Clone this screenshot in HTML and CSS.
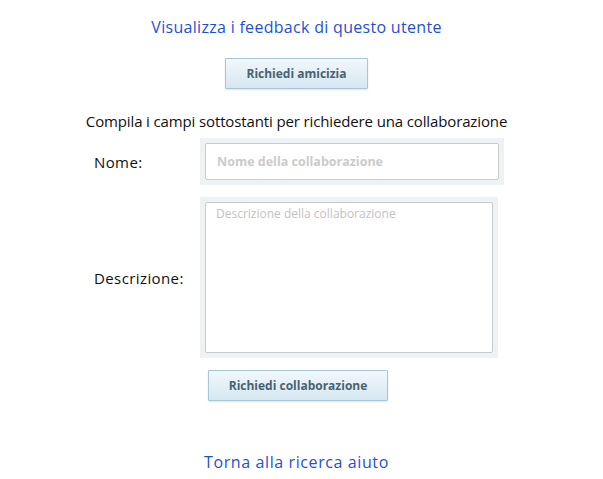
FILE: index.html
```html
<!DOCTYPE html>
<html lang="it">
<head>
<meta charset="utf-8">
<link rel="stylesheet" href="styles.css">
</head>
<body>
<div class="page">
  <a class="link title-link" href="#">Visualizza i feedback di questo utente</a>
  <button class="btn btn-friend" type="button">Richiedi amicizia</button>
  <p class="intro">Compila i campi sottostanti per richiedere una collaborazione</p>
  <form class="form">
    <label class="label label-name" for="nome">Nome:</label>
    <div class="field field-name"><input id="nome" class="input" type="text" placeholder="Nome della collaborazione"></div>
    <label class="label label-desc" for="desc">Descrizione:</label>
    <div class="field field-desc"><textarea id="desc" class="textarea" placeholder="Descrizione della collaborazione"></textarea></div>
    <div class="actions"><button class="btn btn-collab" type="button">Richiedi collaborazione</button></div>
  </form>
  <a class="link back-link" href="#">Torna alla ricerca aiuto</a>
</div>
</body>
</html>
```
FILE: styles.css
```css
html, body {
  margin: 0;
  padding: 0;
  background: #fff;
}
.page {
  width: 593px;
  display: flex;
  flex-direction: column;
  align-items: center;
  font-family: "Open Sans", "DejaVu Sans", sans-serif;
  color: #111;
}
.link {
  color: #1f4fd8;
  text-decoration: none;
  font-size: 16px;
  line-height: 20px;
  letter-spacing: 0.3px;
}
.title-link {
  margin-top: 17px;
}
.btn {
  font-family: "Open Sans", "DejaVu Sans", sans-serif;
  font-weight: 700;
  font-size: 12px;
  color: #4a6272;
  background: linear-gradient(#f1f8fc, #d5e7f1);
  border: 1px solid #a9c5d6;
  border-radius: 1px;
  box-shadow: 0 1px 2px rgba(0,0,0,0.12);
  height: 31px;
  padding: 0;
}
.btn-friend {
  width: 143px;
  margin-top: 21px;
}
.intro {
  margin: 22px 0 0;
  font-size: 15px;
  line-height: 20px;
  letter-spacing: -0.13px;
}
.form {
  margin-top: 7px;
  display: grid;
  grid-template-columns: 106px 304px;
  row-gap: 12px;
  align-items: center;
  margin-left: 5px;
}
.label {
  font-size: 15px;
  letter-spacing: 0.4px;
  color: #111;
}
.field {
  background: #eef2f4;
  padding: 5px;
}
.field-name {
  width: 294px;
}
.field-desc {
  width: 288px;
}
.input {
  box-sizing: border-box;
  display: block;
  width: 100%;
  height: 37px;
  border: 1px solid #c9cccd;
  border-radius: 2px;
  padding: 0 11px;
  font-family: "Open Sans", "DejaVu Sans", sans-serif;
  font-weight: 700;
  font-size: 12.5px;
}
.input::placeholder {
  color: #cbcbcb;
}
.textarea {
  box-sizing: border-box;
  display: block;
  width: 100%;
  height: 151px;
  border: 1px solid #c9cccd;
  border-radius: 2px;
  padding: 2px 10px;
  resize: none;
  font-family: "Open Sans", "DejaVu Sans", sans-serif;
  font-size: 12px;
}
.textarea::placeholder {
  color: #c2c2c2;
}
.actions {
  grid-column: 2;
  padding-left: 8px;
}
.btn-collab {
  width: 180px;
}
.back-link {
  margin-top: 51px;
  letter-spacing: 0.6px;
}
```
